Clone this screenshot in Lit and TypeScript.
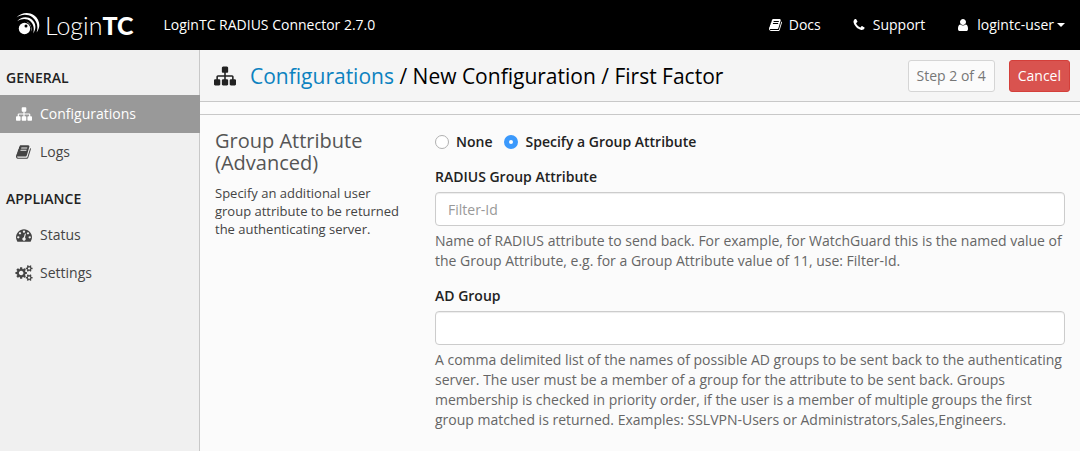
import { LitElement, html, css, svg } from "lit";
import { customElement, property, state } from "lit/decorators.js";

interface Glyph {
  box: string;
  d: string;
}

const GLYPHS: Record<string, Glyph> = {
  sitemap: {
    box: "0 0 1792 1792",
    d: "M1792 1248v320q0 40-28 68t-68 28h-320q-40 0-68-28t-28-68v-320q0-40 28-68t68-28h96v-192h-512v192h96q40 0 68 28t28 68v320q0 40-28 68t-68 28h-320q-40 0-68-28t-28-68v-320q0-40 28-68t68-28h96v-192h-512v192h96q40 0 68 28t28 68v320q0 40-28 68t-68 28h-320q-40 0-68-28t-28-68v-320q0-40 28-68t68-28h96v-192q0-52 38-90t90-38h512v-192h-96q-40 0-68-28t-28-68v-320q0-40 28-68t68-28h320q40 0 68 28t28 68v320q0 40-28 68t-68 28h-96v192h512q52 0 90 38t38 90v192h96q40 0 68 28t28 68z",
  },
  book: {
    box: "64 0 1792 1792",
    d: "M1703 478q40 57 18 129l-275 906q-19 64-76.5 107.5t-122.5 43.5h-923q-77 0-148.5-53.5t-99.5-131.5q-24-67-2-127 0-4 3-27t4-37q1-8-3-21.5t-3-19.5q2-11 8-21t16.5-23.5 16.5-23.5q23-38 45-91.5t30-91.5q3-10 .5-30t-.5-28q3-11 17-28t17-23q21-36 42-92t25-90q1-9-2.5-32t.5-28q4-13 22-30.5t22-22.5q19-26 42.5-84.500t27.500-96.500q1-8-3-25.500t-2-26.500q2-8 9-18t18-23 17-21q8-12 16.500-30.500t15-35 16-36 19.500-32 26.500-23.500 36-11.500 47.500 5.500l-1 3q38-9 51-9h761q74 0 114 56t18 130l-274 906q-36 119-71.500 153.500t-128.500 34.500h-869q-27 0-38 15-11 16-1 43 24 70 144 70h923q29 0 56-15.500t35-41.500l300-987q7-22 5-57 38 15 59 43zm-1064 2q-4 13 2 22.500t20 9.500h608q13 0 25.500-9.500t16.500-22.500l21-64q4-13-2-22.500t-20-9.500h-608q-13 0-25.500 9.500t-16.500 22.500zm-83 256q-4 13 2 22.500t20 9.500h608q13 0 25.500-9.500t16.500-22.500l21-64q4-13-2-22.500t-20-9.500h-608q-13 0-25.500 9.500t-16.500 22.500z",
  },
  phone: {
    box: "128 0 1792 1792",
    d: "M1600 1240q0 27-10 70.5t-21 68.5q-21 50-122 106-94 51-186 51-27 0-53-3.5t-57.5-12.5-47-14.5-55.5-20.5-49-18q-98-35-175-83-127-79-264-216t-216-264q-48-77-83-175-3-9-18-49t-20.5-55.5-14.5-47-12.5-57.5-3.5-53q0-92 51-186 56-101 106-122 25-11 68.5-21t70.5-10q14 0 21 3 18 6 53 76 11 19 30 54t35 63.5 31 53.5q3 4 17.5 25t21.5 35.5 7 28.5q0 20-28.5 50t-62 55-62 53-28.5 46q0 9 5 22.5t8.5 20.5 14 24 11.5 19q76 137 174 235t235 174q2 1 19 11.5t24 14 20.5 8.5 22.5 5q18 0 46-28.5t53-62 55-62 50-28.5q14 0 28.5 7t35.5 21.5 25 17.5q25 15 53.5 31t63.5 35 54 30q70 35 76 53 3 7 3 21z",
  },
  user: {
    box: "128 0 1792 1792",
    d: "M1536 1399q0 109-62.5 187t-150.5 78h-854q-88 0-150.5-78t-62.5-187q0-85 8.5-160.5t31.5-152 58.5-131 94-89 134.5-34.5q131 128 313 128t313-128q76 0 134.5 34.5t94 89 58.5 131 31.5 152 8.5 160.5zm-256-887q0 159-112.5 271.5t-271.5 112.5-271.5-112.5-112.5-271.5 112.5-271.5 271.5-112.5 271.5 112.5 112.5 271.5z",
  },
  gauge: {
    box: "0 0 1792 1792",
    d: "M384 1152q0-53-37.5-90.5t-90.5-37.5-90.5 37.5-37.5 90.5 37.5 90.5 90.5 37.5 90.5-37.5 37.5-90.5zm192-448q0-53-37.5-90.5t-90.5-37.5-90.5 37.5-37.5 90.5 37.5 90.5 90.5 37.5 90.5-37.5 37.5-90.5zm428 481l101-382q6-26-7.5-48.5t-38.5-29.5-48 6.5-30 39.5l-101 382q-60 5-107 43.5t-63 98.5q-20 77 20 146t117 89 146-20 89-117q16-60-6-117t-72-91zm660-33q0-53-37.5-90.5t-90.5-37.5-90.5 37.5-37.5 90.5 37.5 90.5 90.5 37.5 90.5-37.5 37.5-90.5zm-640-640q0-53-37.5-90.5t-90.5-37.5-90.5 37.5-37.5 90.5 37.5 90.5 90.5 37.5 90.5-37.5 37.5-90.5zm448 192q0-53-37.5-90.5t-90.5-37.5-90.5 37.5-37.5 90.5 37.5 90.5 90.5 37.5 90.5-37.5 37.5-90.5zm320 448q0 261-141 483-19 29-54 29h-1402q-35 0-54-29-141-221-141-483 0-182 71-348t191-286 286-191 348-71 348 71 286 191 191 286 71 348z",
  },
  cogs: {
    box: "0 0 1792 1792",
    d: "M832 896q0-106-75-181t-181-75-181 75-75 181 75 181 181 75 181-75 75-181zm768 512q0-52-38-90t-90-38-90 38-38 90q0 53 37.5 90.5t90.5 37.5 90.5-37.5 37.5-90.5zm0-1024q0-52-38-90t-90-38-90 38-38 90q0 53 37.5 90.5t90.5 37.5 90.5-37.5 37.5-90.5zm-384 421v185q0 10-7 19.5t-16 10.5l-155 24q-11 35-32 76 34 48 90 115 7 11 7 20 0 12-7 19-23 30-82.5 89.5t-78.5 59.5q-11 0-21-7l-115-90q-37 19-77 31-11 108-23 155-7 24-30 24h-186q-11 0-20-7.5t-10-17.5l-23-153q-34-10-75-31l-118 89q-7 7-20 7-11 0-21-8-144-133-144-160 0-9 7-19 10-14 41-53t47-61q-23-44-35-82l-152-24q-10-1-17-9.5t-7-19.5v-185q0-10 7-19.5t16-10.5l155-24q11-35 32-76-34-48-90-115-7-11-7-20 0-12 7-20 22-30 82-89t79-59q11 0 21 7l115 90q34-18 77-32 11-108 23-154 7-24 30-24h186q11 0 20 7.5t10 17.5l23 153q34 10 75 31l118-89q8-7 20-7 11 0 21 8 144 133 144 160 0 8-7 19-12 16-42 54t-45 60q23 48 34 82l152 23q10 2 17 10.5t7 19.5zm640 533v140q0 16-149 31-12 27-30 52 51 113 51 138 0 4-4 7-122 71-124 71-8 0-46-47t-52-68q-20 2-30 2t-30-2q-14 21-52 68t-46 47q-2 0-124-71-4-3-4-7 0-25 51-138-18-25-30-52-149-15-149-31v-140q0-16 149-31 13-29 30-52-51-113-51-138 0-4 4-7 4-2 35-20t59-34 30-16q8 0 46 46.5t52 67.5q20-2 30-2t30 2q51-71 92-112l6-2q4 0 124 70 4 3 4 7 0 25-51 138 17 23 30 52 149 15 149 31zm0-1024v140q0 16-149 31-12 27-30 52 51 113 51 138 0 4-4 7-122 71-124 71-8 0-46-47t-52-68q-20 2-30 2t-30-2q-14 21-52 68t-46 47q-2 0-124-71-4-3-4-7 0-25 51-138-18-25-30-52-149-15-149-31v-140q0-16 149-31 13-29 30-52-51-113-51-138 0-4 4-7 4-2 35-20t59-34 30-16q8 0 46 46.5t52 67.5q20-2 30-2t30 2q51-71 92-112l6-2q4 0 124 70 4 3 4 7 0 25-51 138 17 23 30 52 149 15 149 31z",
  },
};

@customElement("app-icon")
class AppIcon extends LitElement {
  static styles = css`
    :host {
      display: inline-flex;
      flex: none;
      width: 16px;
      height: 16px;
    }
    .glyph {
      width: 100%;
      height: 100%;
      overflow: visible;
      fill: currentColor;
    }
  `;

  @property() name = "";

  render() {
    const g = GLYPHS[this.name];
    return html`<svg class="glyph" viewBox=${g.box} aria-hidden="true">${svg`<path d=${g.d}></path>`}</svg>`;
  }
}

@customElement("app-topbar")
class AppTopbar extends LitElement {
  static styles = css`
    :host {
      display: flex;
      align-items: center;
      height: 50px;
      padding: 0 15px;
      background: #000;
      color: #fff;
      font-size: 14px;
      line-height: 20px;
    }
    .logo {
      display: flex;
      align-items: center;
      color: #fff;
      text-decoration: none;
    }
    .eye {
      width: 26px;
      height: 26px;
      margin-right: 4px;
    }
    .word {
      font-family: Lato, sans-serif;
      font-size: 25px;
      line-height: 32px;
      font-weight: 300;
    }
    .tc {
      font-weight: 900;
    }
    .product {
      margin-left: 30px;
    }
    .links {
      display: flex;
      gap: 32px;
      margin-left: auto;
    }
    .link {
      display: flex;
      align-items: center;
      padding: 0;
      border: 0;
      background: none;
      color: inherit;
      font: inherit;
      text-decoration: none;
    }
    .icon {
      width: 14px;
      height: 14px;
      margin-right: 6px;
    }
    .caret {
      margin-left: 3px;
      border: 4px solid transparent;
      border-top-color: currentColor;
      border-bottom: 0;
    }
  `;

  render() {
    return html`
      <a class="logo" href="#home">
        <svg class="eye" viewBox="0 0 26 26" aria-hidden="true">
          <g fill="#fff">
            <path d="M1.500 5.500C6 .4 13.500-.6 19 3.200 25 7.600 26 15 21.600 20.600 23.400 14.600 22.200 9 17.400 5.200 12.600 1.800 6.600 2 1.500 5.500z"></path>
            <path d="M2.200 9.200C6 4.600 12.600 4 16.800 7.600 21 11.400 21.600 16.800 18.200 21.400 19.400 16.800 18.800 12.600 15.600 9.400 11.800 6.200 7 6.200 2.200 9.200z"></path>
            <path d="M11.500 9.400C15.600 11.200 17.400 15.400 16 19.800 16 15.600 14.800 12 11.500 9.400z"></path>
          </g>
          <circle cx="9.500" cy="16.500" r="6.600"></circle>
          <circle cx="9.500" cy="16.500" r="5.700" fill="#fff"></circle>
          <circle cx="11" cy="14" r="1.500"></circle>
        </svg>
        <span class="word">Login<span class="tc">TC</span></span>
      </a>
      <span class="product">LoginTC RADIUS Connector 2.7.0</span>
      <nav class="links">
        <a class="link" href="#docs"><app-icon class="icon" name="book"></app-icon>Docs</a>
        <a class="link" href="#support"><app-icon class="icon" name="phone"></app-icon>Support</a>
        <button class="link" type="button">
          <app-icon class="icon" name="user"></app-icon>logintc-user<span class="caret"></span>
        </button>
      </nav>
    `;
  }
}

const SECTIONS = [
  {
    title: "GENERAL",
    items: [
      { label: "Configurations", icon: "sitemap", active: true },
      { label: "Logs", icon: "book", active: false },
    ],
  },
  {
    title: "APPLIANCE",
    items: [
      { label: "Status", icon: "gauge", active: false },
      { label: "Settings", icon: "cogs", active: false },
    ],
  },
];

@customElement("app-sidebar")
class AppSidebar extends LitElement {
  static styles = css`
    :host {
      display: block;
      box-sizing: border-box;
      background: linear-gradient(to left, #c8c8c8 1px, #f0f0f0 1px);
      font-size: 14px;
      line-height: 20px;
    }
    .title {
      margin: 0;
      padding: 18px 6px 7px;
      color: #222;
      font-size: 14px;
      font-weight: 600;
    }
    .item {
      display: flex;
      align-items: center;
      gap: 8px;
      padding: 9px 16px;
      color: #444;
      text-decoration: none;
    }
    .item.active {
      background: #999;
      color: #fff;
    }
  `;

  render() {
    return html`<nav>
      ${SECTIONS.map(
        (s) => html`
          <h2 class="title">${s.title}</h2>
          ${s.items.map(
            (i) => html`<a class="item ${i.active ? "active" : ""}" href="#${i.label.toLowerCase()}"
              ><app-icon name=${i.icon}></app-icon>${i.label}</a
            >`
          )}
        `
      )}
    </nav>`;
  }
}

@customElement("app-root")
class AppRoot extends LitElement {
  static styles = css`
    :host {
      display: grid;
      grid-template: auto 1fr / 200px minmax(0, 1fr);
      min-height: 100vh;
      overflow: hidden;
      border-radius: 0 0 5px 5px;
      background: #fbfbfb;
      color: #222;
      font-family: "Open Sans", sans-serif;
      font-size: 14px;
      line-height: 20px;
    }
    .top {
      grid-column: 1 / -1;
    }
    .pagehead {
      display: flex;
      align-items: center;
      gap: 14px;
      padding: 10px 10px 9px 14px;
      border-bottom: 1px solid #c8c8c8;
      background: #f5f5f5;
    }
    .headicon {
      width: 22px;
      height: 22px;
    }
    .crumbs {
      flex: 1;
      margin: 0;
      color: #000;
      font-size: 21px;
      line-height: 30px;
      font-weight: 400;
    }
    .crumb {
      color: #0c82c0;
      text-decoration: none;
    }
    .btn {
      box-sizing: border-box;
      height: 32px;
      padding: 0 8px;
      border: 1px solid #d5d5d5;
      border-radius: 3px;
      background: #fbfbfb;
      color: #777;
      font: inherit;
    }
    .btn.danger {
      border-color: #d43f3a;
      background: #d9534f;
      color: #fff;
    }
    .section {
      display: grid;
      grid-template-columns: 1fr 3fr;
      margin-top: 12px;
      border-top: 1px solid #c8c8c8;
    }
    .about {
      padding: 15px;
      color: #444;
    }
    .heading {
      margin: 0 0 10px;
      color: #555;
      font-size: 20px;
      line-height: 22px;
      font-weight: 400;
    }
    .lead {
      margin: 0;
      font-size: 13px;
      line-height: 18px;
    }
    .fields {
      padding: 17px 15px;
    }
    .choices {
      display: flex;
      gap: 12px;
      margin-bottom: 15px;
    }
    .choice {
      display: flex;
      align-items: center;
      gap: 7px;
      font-weight: 600;
    }
    .radio {
      appearance: none;
      box-sizing: border-box;
      width: 14px;
      height: 14px;
      margin: 0;
      border: 1px solid #b0b0b0;
      border-radius: 50%;
      background: #fff;
    }
    .radio:checked {
      border: 5px solid #3b99fc;
    }
    .label {
      display: block;
      margin-bottom: 5px;
      font-weight: 600;
    }
    .input {
      display: block;
      box-sizing: border-box;
      width: 100%;
      height: 34px;
      padding: 6px 12px;
      border: 1px solid #ccc;
      border-radius: 4px;
      background: #fff;
      box-shadow: inset 0 1px 1px rgba(0, 0, 0, 0.075);
      color: #555;
      font: inherit;
    }
    .input::placeholder {
      color: #999;
      opacity: 1;
    }
    .help {
      margin: 5px 0 15px;
      color: #666;
    }
  `;

  @state() private mode = "attribute";

  private choice(value: string, label: string) {
    return html`<label class="choice">
      <input
        class="radio"
        type="radio"
        name="mode"
        .checked=${this.mode === value}
        @change=${() => (this.mode = value)}
      />${label}</label
    >`;
  }

  render() {
    return html`
      <app-topbar class="top"></app-topbar>
      <app-sidebar></app-sidebar>
      <main>
        <header class="pagehead">
          <app-icon class="headicon" name="sitemap"></app-icon>
          <h1 class="crumbs"><a class="crumb" href="#configurations">Configurations</a> / New Configuration / First Factor</h1>
          <button class="btn" type="button">Step 2 of 4</button>
          <button class="btn danger" type="button">Cancel</button>
        </header>
        <section class="section">
          <div class="about">
            <h2 class="heading">Group Attribute (Advanced)</h2>
            <p class="lead">Specify an additional user group attribute to be returned the authenticating server.</p>
          </div>
          <form class="fields">
            <div class="choices">
              ${this.choice("none", "None")} ${this.choice("attribute", "Specify a Group Attribute")}
            </div>
            <label class="label" for="radius">RADIUS Group Attribute</label>
            <input class="input" id="radius" type="text" placeholder="Filter-Id" />
            <p class="help">
              Name of RADIUS attribute to send back. For example, for WatchGuard this is the named value of the Group
              Attribute, e.g. for a Group Attribute value of 11, use: Filter-Id.
            </p>
            <label class="label" for="group">AD Group</label>
            <input class="input" id="group" type="text" />
            <p class="help">
              A comma delimited list of the names of possible AD groups to be sent back to the authenticating server.
              The user must be a member of a group for the attribute to be sent back. Groups membership is checked in
              priority order, if the user is a member of multiple groups the first group matched is returned. Examples:
              SSLVPN-Users or Administrators,Sales,Engineers.
            </p>
          </form>
        </section>
      </main>
    `;
  }
}
